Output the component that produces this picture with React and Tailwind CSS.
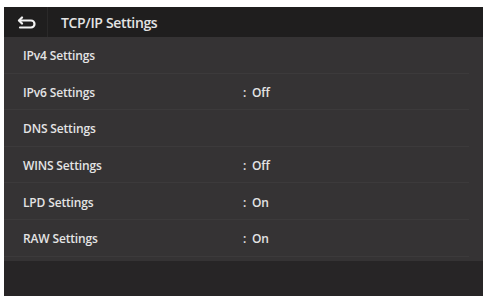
export default function App() {
  const rows = [
    { label: "IPv4 Settings" },
    { label: "IPv6 Settings", value: "Off" },
    { label: "DNS Settings" },
    { label: "WINS Settings", value: "Off" },
    { label: "LPD Settings", value: "On" },
    { label: "RAW Settings", value: "On" },
  ]

  return (
    <div className="w-[487px] h-[298px] bg-white pt-[7px] pl-[4px] pr-[4px] pb-[2px]">
      <div
        className="h-[289px] flex flex-col bg-[#353334] text-[#e4e4e4]"
        style={{ fontFamily: '"Open Sans", "Noto Sans", sans-serif' }}
      >
        {/* Header */}
        <div className="h-[30px] flex items-center bg-[#1f1e1e] shrink-0">
          <div className="w-[44px] h-full flex items-center justify-center pl-[4px] border-r border-[#2a2929]">
            <svg width="21" height="13" viewBox="0 0 21 13" fill="none" stroke="#f2f2f2" strokeWidth="2.2" strokeLinecap="round" strokeLinejoin="round">
              <path d="M5 1.5 L2 4.5 L5 7.5" />
              <path d="M2.5 4.5 H14 a3.5 3.5 0 0 1 0 7 H3" />
            </svg>
          </div>
          <div className="pl-[13px] text-[14px] font-semibold tracking-[-0.35px]">TCP/IP Settings</div>
        </div>

        {/* Rows */}
        <div className="flex flex-col pr-[14px] shrink-0">
          {rows.map((r) => (
            <div key={r.label} className="h-[36.6px] flex items-center pt-[3px] border-b border-[#3c3a3b]">
              <div className="w-[239px] pl-[19px] text-[12px] font-semibold tracking-[-0.15px]">{r.label}</div>
              {r.value && (
                <div className="text-[12px] font-semibold flex gap-[6px] tracking-[-0.2px]">
                  <span>:</span>
                  <span>{r.value}</span>
                </div>
              )}
            </div>
          ))}
        </div>

        {/* Footer */}
        <div className="flex-1 bg-[#272526] mt-[4px]"></div>
      </div>
    </div>
  )
}
